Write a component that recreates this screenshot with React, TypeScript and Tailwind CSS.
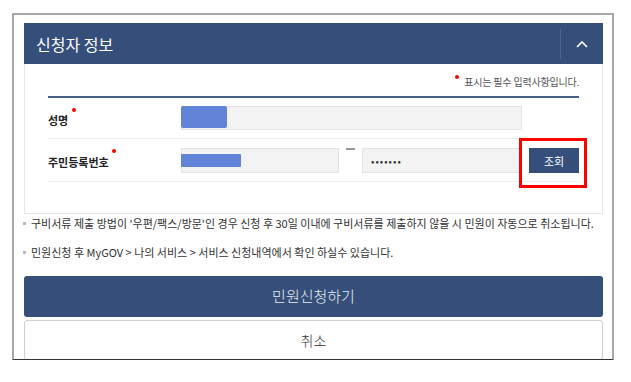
export default function App() {
  const font = { fontFamily: '"Noto Sans CJK KR", "Noto Sans", sans-serif' };
  const notes = [
    "구비서류 제출 방법이 '우편/팩스/방문'인 경우 신청 후 30일 이내에 구비서류를 제출하지 않을 시 민원이 자동으로 취소됩니다.",
    "민원신청 후 MyGOV > 나의 서비스 > 서비스 신청내역에서 확인 하실수 있습니다.",
  ];

  return (
    <div className="w-[631px] h-[382px] bg-white pl-[12px] pt-[13px]" style={font}>
      <div className="w-[602px] h-[347px] overflow-hidden border-x-2 border-t-2 border-b border-x-[#a8a8a8] border-t-[#a8a8a8] border-b-[#333] pl-[10px] pt-[8px]">
        <div className="w-[579px]">
          {/* header */}
          <div className="flex h-[41px] items-center bg-[#354f7a]">
            <h2 className="flex-1 pl-3 text-[16px] font-normal text-white">신청자 정보</h2>
            <div className="h-[30px] w-px bg-[#4a6490]" />
            <button className="flex h-full w-[42px] items-center justify-center">
              <svg width="12" height="8" viewBox="0 0 12 8" fill="none" stroke="white" strokeWidth="1.6">
                <path d="M1 7 L6 2 L11 7" />
              </svg>
            </button>
          </div>

          {/* form panel */}
          <div className="h-[150px] border-x border-b border-[#e6e6e6] px-[23px]">
            <div className="flex h-[32px] items-center justify-end pt-[2px]">
              <span className="relative -top-[4px] mr-[5px] h-[4px] w-[4px] rounded-full bg-[#f00]" />
              <span className="text-[10px] tracking-[-0.2px] text-[#555]">표시는 필수 입력사항입니다.</span>
            </div>
            <div className="h-[2px] bg-[#4a5f85]" />

            <div className="flex h-[41px] items-center border-b border-[#eeeeee]">
              <div className="flex w-[133px] items-start">
                <span className="pt-[4px] text-[11px] font-bold text-[#222]">성명</span>
                <span className="ml-[4px] h-[4px] w-[4px] rounded-full bg-[#f00]" />
              </div>
              <div className="h-[24px] w-[341px] border border-[#e3e3e3] bg-[#f3f3f3]">
                <div className="-ml-px -mt-px h-[22px] w-[46px] rounded-[2px] bg-[#6284d8]" />
              </div>
            </div>

            <div className="flex h-[43px] items-center border-b border-[#eeeeee]">
              <div className="flex w-[133px] items-start">
                <span className="pt-[5px] text-[11px] font-bold text-[#222]">주민등록번호</span>
                <span className="ml-[3px] h-[4px] w-[4px] rounded-full bg-[#f00]" />
              </div>
              <div className="flex h-[25px] w-[158px] items-center border border-[#e3e3e3] bg-[#f3f3f3]">
                <div className="-ml-px h-[13px] w-[60px] rounded-[1px] bg-[#6284d8]" />
              </div>
              <div className="flex w-[23px] justify-center self-start pt-[9px]">
                <span className="h-[2px] w-[9px] bg-[#999]" />
              </div>
              <div className="flex h-[25px] w-[159px] items-center border border-[#e3e3e3] bg-[#f3f3f3] pl-[8px] text-[10px] tracking-[1px] text-[#333]">
                •••••••
              </div>
              <div className="relative ml-[8px]">
                <button className="h-[25px] w-[50px] bg-[#354f7a] text-[11px] text-white">조회</button>
                <span className="absolute -left-[10px] -top-[9px] h-[50px] w-[68px] border-[3px] border-[#f00]" />
              </div>
            </div>
          </div>

          {/* notes */}
          <ul className="-ml-[1px] flex h-[62px] flex-col gap-[11px] text-[11px] tracking-[0px] text-[#333]">
            {notes.map((n, i) => (
              <li key={i} className="flex h-[18px] items-center">
                <span className="mr-[5px] h-[3px] w-[3px] bg-[#bbb]" />
                <span className="whitespace-nowrap">{n}</span>
              </li>
            ))}
          </ul>

          {/* buttons */}
          <button className="flex h-[41px] w-full items-center justify-center rounded-[3px] bg-[#354f7a] text-[15px] font-light text-[#e9edf4]">
            민원신청하기
          </button>
          <button className="mt-[3px] flex h-[40px] w-full items-center justify-center rounded-[3px] border border-[#cfcfcf] bg-white text-[14px] font-light text-[#333]">
            취소
          </button>
        </div>
      </div>
    </div>
  );
}
